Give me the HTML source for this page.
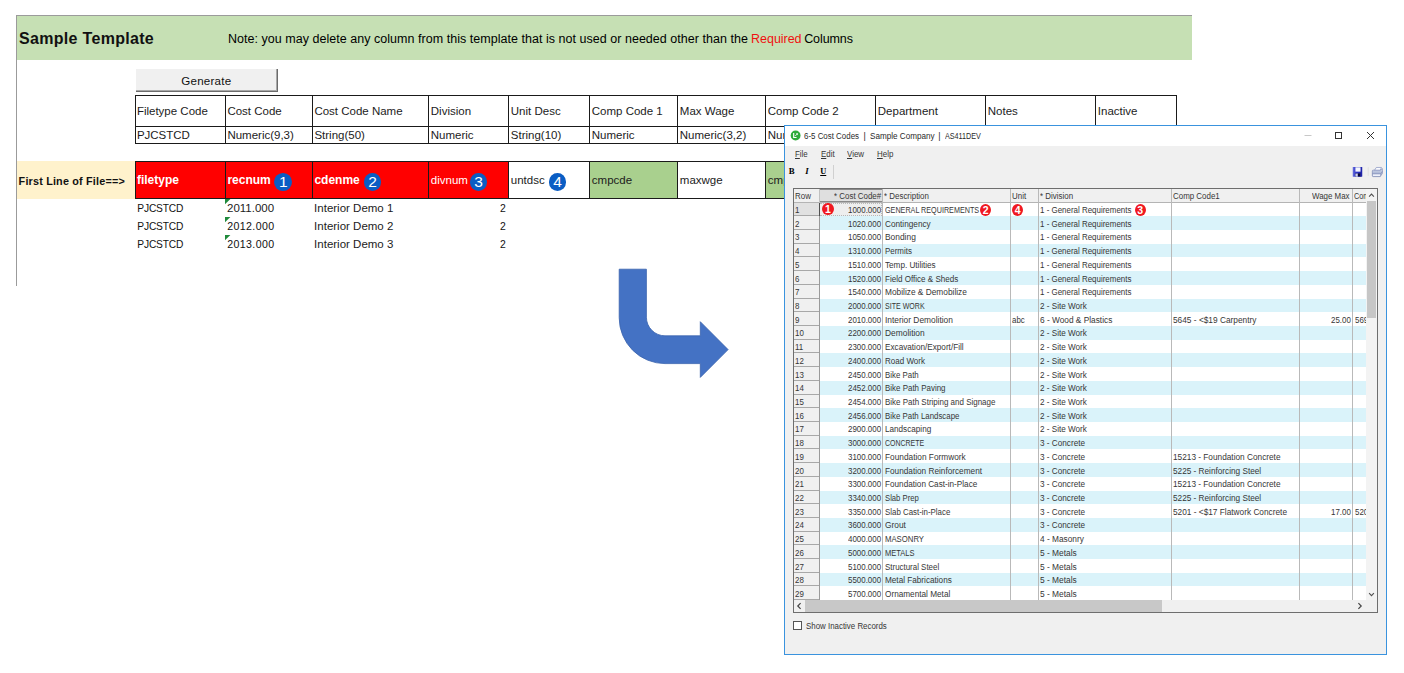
<!DOCTYPE html><html><head><meta charset="utf-8"><title>Sample Template</title><style>

html,body{margin:0;padding:0;background:#fff;}
body{width:1404px;height:673px;position:relative;overflow:hidden;font-family:"Liberation Sans",sans-serif;}
.a{position:absolute;}
.t{position:absolute;white-space:pre;line-height:1;}
.btn{background:#f0f0f0;border-right:1px solid #6b6b6b;border-bottom:1px solid #6b6b6b;box-sizing:border-box;box-shadow:inset -1px -1px 0 #a8a8a8;}
.circ{background:#0a5dc4;border-radius:50%;width:17.8px;height:17.8px;line-height:17.8px;text-align:center;font-size:15.5px;color:#fff;}
.rc{background:#f01820;border-radius:50%;width:11.4px;height:12.2px;line-height:12.4px;text-align:center;font-size:10.5px;font-weight:bold;color:#fff;}
.req{color:#f01010;}
.ul{text-decoration:underline;}
.mn::first-letter{text-decoration:underline;}
.clip{width:12px;overflow:hidden;}
.clip2{width:13.8px;overflow:hidden;}

</style></head><body>
<div class="a" style="left:16px;top:15px;width:1176px;height:1px;background:#9b9b9b;"></div>
<div class="a" style="left:16px;top:15px;width:1px;height:271px;background:#9b9b9b;"></div>
<div class="a" style="left:17px;top:16px;width:1175px;height:44px;background:#c6e0b4;"></div>
<div class="t" style="top:31px;font-size:16px;letter-spacing:0.299px;left:19.10px;font-weight:bold;color:#111;">Sample Template</div>
<div class="t" style="top:33px;font-size:12.5px;letter-spacing:0.032px;left:228.00px;">Note: you may delete any column from this template that is not used or needed other than the </div>
<div class="t" style="top:33px;font-size:12.5px;letter-spacing:-0.042px;left:751.10px;color:#f01010;">Required</div>
<div class="t" style="top:33px;font-size:12.5px;letter-spacing:-0.090px;left:804.20px;">Columns</div>
<div class="a btn" style="left:136px;top:69px;width:142px;height:22.6px;"></div>
<div class="t" style="top:75px;font-size:11.6px;letter-spacing:0.207px;left:181.30px;color:#111;">Generate</div>
<div class="a" style="left:135px;top:95px;width:1042px;height:1px;background:#1a1a1a;"></div>
<div class="a" style="left:135px;top:126px;width:1042px;height:1px;background:#1a1a1a;"></div>
<div class="a" style="left:135px;top:143px;width:1042px;height:1px;background:#1a1a1a;"></div>
<div class="a" style="left:135px;top:95px;width:1px;height:49px;background:#1a1a1a;"></div>
<div class="a" style="left:225px;top:95px;width:1px;height:49px;background:#1a1a1a;"></div>
<div class="a" style="left:312px;top:95px;width:1px;height:49px;background:#1a1a1a;"></div>
<div class="a" style="left:428px;top:95px;width:1px;height:49px;background:#1a1a1a;"></div>
<div class="a" style="left:508px;top:95px;width:1px;height:49px;background:#1a1a1a;"></div>
<div class="a" style="left:589px;top:95px;width:1px;height:49px;background:#1a1a1a;"></div>
<div class="a" style="left:677px;top:95px;width:1px;height:49px;background:#1a1a1a;"></div>
<div class="a" style="left:765px;top:95px;width:1px;height:49px;background:#1a1a1a;"></div>
<div class="a" style="left:875px;top:95px;width:1px;height:49px;background:#1a1a1a;"></div>
<div class="a" style="left:985px;top:95px;width:1px;height:49px;background:#1a1a1a;"></div>
<div class="a" style="left:1095px;top:95px;width:1px;height:49px;background:#1a1a1a;"></div>
<div class="a" style="left:1176px;top:95px;width:1px;height:49px;background:#1a1a1a;"></div>
<div class="t" style="top:106px;font-size:11.5px;left:136.90px;color:#1c1c1c;">Filetype Code</div>
<div class="t" style="top:130px;font-size:11.5px;left:136.90px;color:#1c1c1c;">PJCSTCD</div>
<div class="t" style="top:106px;font-size:11.5px;left:227.40px;color:#1c1c1c;">Cost Code</div>
<div class="t" style="top:130px;font-size:11.5px;left:227.40px;color:#1c1c1c;">Numeric(9,3)</div>
<div class="t" style="top:106px;font-size:11.5px;left:314.40px;color:#1c1c1c;">Cost Code Name</div>
<div class="t" style="top:130px;font-size:11.5px;left:314.40px;color:#1c1c1c;">String(50)</div>
<div class="t" style="top:106px;font-size:11.5px;left:430.80px;color:#1c1c1c;">Division</div>
<div class="t" style="top:130px;font-size:11.5px;left:430.80px;color:#1c1c1c;">Numeric</div>
<div class="t" style="top:106px;font-size:11.5px;left:510.80px;color:#1c1c1c;">Unit Desc</div>
<div class="t" style="top:130px;font-size:11.5px;left:510.80px;color:#1c1c1c;">String(10)</div>
<div class="t" style="top:106px;font-size:11.5px;left:591.80px;color:#1c1c1c;">Comp Code 1</div>
<div class="t" style="top:130px;font-size:11.5px;left:591.80px;color:#1c1c1c;">Numeric</div>
<div class="t" style="top:106px;font-size:11.5px;left:679.80px;color:#1c1c1c;">Max Wage</div>
<div class="t" style="top:130px;font-size:11.5px;left:679.80px;color:#1c1c1c;">Numeric(3,2)</div>
<div class="t" style="top:106px;font-size:11.5px;left:767.80px;color:#1c1c1c;">Comp Code 2</div>
<div class="t" style="top:130px;font-size:11.5px;left:767.80px;color:#1c1c1c;">Numeric</div>
<div class="t" style="top:106px;font-size:11.5px;left:877.80px;color:#1c1c1c;">Department</div>
<div class="t" style="top:130px;font-size:11.5px;left:877.80px;color:#1c1c1c;">String(50)</div>
<div class="t" style="top:106px;font-size:11.5px;left:987.80px;color:#1c1c1c;">Notes</div>
<div class="t" style="top:130px;font-size:11.5px;left:987.80px;color:#1c1c1c;">String</div>
<div class="t" style="top:106px;font-size:11.5px;left:1097.80px;color:#1c1c1c;">Inactive</div>
<div class="t" style="top:130px;font-size:11.5px;left:1097.80px;color:#1c1c1c;">String(1)</div>
<div class="a" style="left:17px;top:161px;width:118px;height:38.4px;background:#fff2cc;"></div>
<div class="t" style="top:176px;font-size:10.8px;letter-spacing:0.191px;left:18.60px;font-weight:bold;color:#111;">First Line of File==&gt;</div>
<div class="a" style="left:135px;top:161px;width:90px;height:38px;background:#ff0000;"></div>
<div class="a" style="left:225px;top:161px;width:87px;height:38px;background:#ff0000;"></div>
<div class="a" style="left:312px;top:161px;width:116px;height:38px;background:#ff0000;"></div>
<div class="a" style="left:428px;top:161px;width:80px;height:38px;background:#ff0000;"></div>
<div class="a" style="left:508px;top:161px;width:81px;height:38px;background:#ffffff;"></div>
<div class="a" style="left:589px;top:161px;width:88px;height:38px;background:#a9d08e;"></div>
<div class="a" style="left:677px;top:161px;width:88px;height:38px;background:#ffffff;"></div>
<div class="a" style="left:765px;top:161px;width:110px;height:38px;background:#a9d08e;"></div>
<div class="a" style="left:875px;top:161px;width:110px;height:38px;background:#ffffff;"></div>
<div class="a" style="left:985px;top:161px;width:110px;height:38px;background:#ffffff;"></div>
<div class="a" style="left:1095px;top:161px;width:81px;height:38px;background:#ffffff;"></div>
<div class="a" style="left:135px;top:161px;width:1042px;height:1px;background:#1a1a1a;"></div>
<div class="a" style="left:135px;top:198px;width:1042px;height:1px;background:#1a1a1a;"></div>
<div class="a" style="left:135px;top:161px;width:1px;height:38px;background:#1a1a1a;"></div>
<div class="a" style="left:225px;top:161px;width:1px;height:38px;background:#1a1a1a;"></div>
<div class="a" style="left:312px;top:161px;width:1px;height:38px;background:#1a1a1a;"></div>
<div class="a" style="left:428px;top:161px;width:1px;height:38px;background:#1a1a1a;"></div>
<div class="a" style="left:508px;top:161px;width:1px;height:38px;background:#1a1a1a;"></div>
<div class="a" style="left:589px;top:161px;width:1px;height:38px;background:#1a1a1a;"></div>
<div class="a" style="left:677px;top:161px;width:1px;height:38px;background:#1a1a1a;"></div>
<div class="a" style="left:765px;top:161px;width:1px;height:38px;background:#1a1a1a;"></div>
<div class="a" style="left:875px;top:161px;width:1px;height:38px;background:#1a1a1a;"></div>
<div class="a" style="left:985px;top:161px;width:1px;height:38px;background:#1a1a1a;"></div>
<div class="a" style="left:1095px;top:161px;width:1px;height:38px;background:#1a1a1a;"></div>
<div class="a" style="left:1176px;top:161px;width:1px;height:38px;background:#1a1a1a;"></div>
<div class="t" style="top:174px;font-size:12px;left:136.90px;font-weight:bold;color:#fff;">filetype</div>
<div class="t" style="top:174px;font-size:12px;left:227.40px;font-weight:bold;color:#fff;">recnum</div>
<div class="t" style="top:174px;font-size:12px;left:314.40px;font-weight:bold;color:#fff;">cdenme</div>
<div class="t" style="top:175px;font-size:11.5px;left:430.80px;color:#fff;">divnum</div>
<div class="t" style="top:175px;font-size:11.5px;left:510.80px;color:#1c1c1c;">untdsc</div>
<div class="t" style="top:175px;font-size:11.5px;left:591.80px;color:#1c1c1c;">cmpcde</div>
<div class="t" style="top:175px;font-size:11.5px;left:679.80px;color:#1c1c1c;">maxwge</div>
<div class="t" style="top:175px;font-size:11.5px;left:767.80px;color:#1c1c1c;">cmpcd2</div>
<div class="t" style="top:175px;font-size:11.5px;left:877.80px;color:#1c1c1c;">dptmnt</div>
<div class="t" style="top:175px;font-size:11.5px;left:987.80px;color:#1c1c1c;">ntetxt</div>
<div class="t" style="top:175px;font-size:11.5px;left:1097.80px;color:#1c1c1c;">inactv</div>
<div class="a circ" style="left:274.4px;top:173.0px;">1</div>
<div class="a circ" style="left:363.6px;top:173.0px;">2</div>
<div class="a circ" style="left:469.6px;top:173.3px;">3</div>
<div class="a circ" style="left:548.7px;top:173.2px;">4</div>
<div class="t" style="top:204px;font-size:10.2px;letter-spacing:-0.155px;left:137.30px;color:#111;">PJCSTCD</div>
<div class="t" style="top:203px;font-size:11.5px;left:227.00px;color:#1c1c1c;">2011.000</div>
<div class="t" style="top:203px;font-size:11.5px;left:314.10px;color:#1c1c1c;">Interior Demo 1</div>
<div class="t" style="top:204px;font-size:10.4px;left:499.90px;color:#111;">2</div>
<svg class="a" style="left:225.4px;top:199.4px" width="6" height="6"><path d="M0 0H5.4L0 5.2Z" fill="#1f8a3b"/></svg>
<div class="t" style="top:222px;font-size:10.2px;letter-spacing:-0.155px;left:137.30px;color:#111;">PJCSTCD</div>
<div class="t" style="top:221px;font-size:10.6px;letter-spacing:0.377px;left:227.30px;color:#111;">2012.000</div>
<div class="t" style="top:221px;font-size:11.5px;left:314.10px;color:#1c1c1c;">Interior Demo 2</div>
<div class="t" style="top:222px;font-size:10.4px;left:499.90px;color:#111;">2</div>
<svg class="a" style="left:225.4px;top:217.2px" width="6" height="6"><path d="M0 0H5.4L0 5.2Z" fill="#1f8a3b"/></svg>
<div class="t" style="top:240px;font-size:10.2px;letter-spacing:-0.155px;left:137.30px;color:#111;">PJCSTCD</div>
<div class="t" style="top:239px;font-size:10.6px;letter-spacing:0.377px;left:227.30px;color:#111;">2013.000</div>
<div class="t" style="top:239px;font-size:11.5px;left:314.10px;color:#1c1c1c;">Interior Demo 3</div>
<div class="t" style="top:240px;font-size:10.4px;left:499.90px;color:#111;">2</div>
<svg class="a" style="left:225.4px;top:235px" width="6" height="6"><path d="M0 0H5.4L0 5.2Z" fill="#1f8a3b"/></svg>
<svg class="a" style="left:600px;top:260px" width="140" height="130" viewBox="600 260 140 130"><path d="M619.2 269.2H646.4V317.2A18.6 18.6 0 0 0 665 335.8H700.3V321.7L728.1 349.6L700.3 377.4V363.6H665A45.8 45.8 0 0 1 619.2 317.8Z" fill="#4472c4" stroke="#3a63ad" stroke-width="0.8"/></svg>
<div class="a" style="left:784px;top:125px;width:603px;height:530px;background:#f0f0f0;border:1px solid #3a93de;box-sizing:border-box;"></div>
<div class="a" style="left:785px;top:126px;width:601px;height:20px;background:#fff;"></div>
<svg class="a" style="left:790px;top:129.6px" width="11" height="11" viewBox="0 0 11 11"><circle cx="5.6" cy="5.5" r="4.95" fill="#2eab3b"/><path d="M3.7 3.1V7.5H6.6" stroke="#fff" stroke-width="1.15" fill="none"/><path d="M5.3 5.9L7.3 3.9" stroke="#fff" stroke-width="0.9" fill="none"/><path d="M5.9 3.3H7.9V5.3Z" fill="#fff"/></svg>
<div class="t" style="top:132px;font-size:8.9px;transform:scaleX(0.8918);transform-origin:0 0;left:804.40px;color:#2a2a2a;">6-5 Cost Codes</div>
<div class="t" style="top:132px;font-size:8.9px;transform:scaleX(1.0000);transform-origin:0 0;left:863.60px;color:#2a2a2a;">|</div>
<div class="t" style="top:132px;font-size:8.9px;transform:scaleX(0.9143);transform-origin:0 0;left:869.50px;color:#2a2a2a;">Sample Company</div>
<div class="t" style="top:132px;font-size:8.9px;transform:scaleX(1.0000);transform-origin:0 0;left:938.20px;color:#2a2a2a;">|</div>
<div class="t" style="top:132px;font-size:8.9px;transform:scaleX(0.8113);transform-origin:0 0;left:944.50px;color:#2a2a2a;">AS411DEV</div>
<svg class="a" style="left:1300px;top:128px" width="84" height="16" viewBox="1300 128 84 16"><path d="M1304.5 135.5H1311.5" stroke="#c8c8c8" stroke-width="1"/><rect x="1335.5" y="132.5" width="6" height="6" fill="none" stroke="#333" stroke-width="1"/><path d="M1367 132L1374 139M1374 132L1367 139" stroke="#333" stroke-width="1"/></svg>
<div class="t" style="top:150px;font-size:8.5px;transform:scaleX(0.9325);transform-origin:0 0;left:795.10px;color:#363636;"><u>F</u>ile</div>
<div class="t" style="top:150px;font-size:8.5px;transform:scaleX(0.9325);transform-origin:0 0;left:820.60px;color:#363636;"><u>E</u>dit</div>
<div class="t" style="top:150px;font-size:8.5px;transform:scaleX(0.9325);transform-origin:0 0;left:847.10px;color:#363636;"><u>V</u>iew</div>
<div class="t" style="top:150px;font-size:8.5px;transform:scaleX(0.9325);transform-origin:0 0;left:877.40px;color:#363636;"><u>H</u>elp</div>
<div class="t" style="top:167px;font-size:8.8px;left:788.80px;font-weight:bold;font-family:'Liberation Serif', serif;">B</div>
<div class="t" style="top:167px;font-size:8.8px;left:805.20px;font-weight:bold;font-style:italic;font-family:'Liberation Serif', serif;">I</div>
<div class="t ul" style="top:168px;font-size:8.4px;left:820.20px;font-weight:bold;font-family:'Liberation Serif', serif;">U</div>
<div class="a" style="left:833px;top:165px;width:1px;height:14px;background:#d0d0d0;"></div>
<svg class="a" style="left:1350px;top:165px" width="35" height="14" viewBox="631.2 451.96 368.2 147.28"><defs><linearGradient id="sv" x1="0" x2="1" y1="0" y2="0"><stop offset="0" stop-color="#6a70dc"/><stop offset="0.35" stop-color="#2f36c8"/><stop offset="1" stop-color="#1d22a8"/></linearGradient><linearGradient id="pr" x1="0" x2="0" y1="0" y2="1"><stop offset="0" stop-color="#d5dcee"/><stop offset="1" stop-color="#8e9cc2"/></linearGradient></defs><rect x="660" y="472" width="100" height="103" rx="6" fill="url(#sv)"/><rect x="688" y="476" width="54" height="46" fill="#f3f5fd"/><rect x="684" y="538" width="60" height="37" fill="#20207a"/><rect x="688" y="542" width="26" height="33" fill="#cfd3ec"/><rect x="714" y="544" width="22" height="24" fill="#0c0c30"/><rect x="818" y="475" width="9" height="92" fill="#dedede"/><path d="M886 512L908 478H962L948 512Z" fill="#fbfcff" stroke="#7f8dbb" stroke-width="7"/><path d="M866 514Q866 506 876 506H950L972 490V540L950 574H876Q866 574 866 566Z" fill="url(#pr)" stroke="#6f7dae" stroke-width="6"/><path d="M866 545H952L972 520" fill="none" stroke="#6f7dae" stroke-width="5"/><rect x="872" y="550" width="76" height="18" fill="#eef1fa"/></svg>
<div class="a" style="left:793px;top:188px;width:585px;height:425px;background:#fff;border:1px solid #6e6e6e;box-sizing:border-box;"></div>
<div class="a" style="left:794px;top:189px;width:572px;height:13px;background:#f0f0f0;"></div>
<div class="a" style="left:820px;top:189px;width:62px;height:13px;background:#dfdfdf;"></div>
<div class="a" style="left:794px;top:202px;width:572px;height:1px;background:#b4b4b4;"></div>
<div class="a" style="left:820px;top:189px;width:63px;height:1px;background:#8a8a8a;"></div>
<div class="a" style="left:820px;top:201px;width:63px;height:1px;background:#8a8a8a;"></div>
<div class="a" style="left:820px;top:203px;width:62px;height:13px;background:#eeeeee;"></div>
<div class="a" style="left:794px;top:203px;width:25px;height:13px;background:#e1e1e1;border-bottom:1px solid #a8a8a8;box-sizing:border-box;"></div>
<div class="t" style="top:206px;font-size:8.5px;transform:scaleX(0.9325);transform-origin:0 0;left:794.90px;color:#363636;">1</div>
<div class="t" style="top:206px;font-size:8.5px;transform:scaleX(0.9325);transform-origin:0 0;left:848.14px;color:#363636;">1000.000</div>
<div class="t" style="top:206px;font-size:8.5px;transform:scaleX(0.8466);transform-origin:0 0;left:884.70px;color:#363636;">GENERAL REQUIREMENTS</div>
<div class="t" style="top:206px;font-size:8.5px;transform:scaleX(0.9346);transform-origin:0 0;left:1040.30px;color:#363636;">1 - General Requirements</div>
<div class="a" style="left:820px;top:216px;width:546px;height:14px;background:#daf3fa;"></div>
<div class="a" style="left:794px;top:216px;width:25px;height:14px;background:#f0f0f0;border-bottom:1px solid #a8a8a8;box-sizing:border-box;"></div>
<div class="t" style="top:220px;font-size:8.5px;transform:scaleX(0.9325);transform-origin:0 0;left:794.90px;color:#363636;">2</div>
<div class="t" style="top:220px;font-size:8.5px;transform:scaleX(0.9325);transform-origin:0 0;left:848.14px;color:#363636;">1020.000</div>
<div class="t" style="top:220px;font-size:8.5px;transform:scaleX(0.9669);transform-origin:0 0;left:884.70px;color:#363636;">Contingency</div>
<div class="t" style="top:220px;font-size:8.5px;transform:scaleX(0.9346);transform-origin:0 0;left:1040.30px;color:#363636;">1 - General Requirements</div>
<div class="a" style="left:794px;top:230px;width:25px;height:14px;background:#f0f0f0;border-bottom:1px solid #a8a8a8;box-sizing:border-box;"></div>
<div class="t" style="top:233px;font-size:8.5px;transform:scaleX(0.9325);transform-origin:0 0;left:794.90px;color:#363636;">3</div>
<div class="t" style="top:233px;font-size:8.5px;transform:scaleX(0.9325);transform-origin:0 0;left:848.14px;color:#363636;">1050.000</div>
<div class="t" style="top:233px;font-size:8.5px;transform:scaleX(0.9871);transform-origin:0 0;left:884.70px;color:#363636;">Bonding</div>
<div class="t" style="top:233px;font-size:8.5px;transform:scaleX(0.9346);transform-origin:0 0;left:1040.30px;color:#363636;">1 - General Requirements</div>
<div class="a" style="left:820px;top:244px;width:546px;height:13px;background:#daf3fa;"></div>
<div class="a" style="left:794px;top:244px;width:25px;height:13px;background:#f0f0f0;border-bottom:1px solid #a8a8a8;box-sizing:border-box;"></div>
<div class="t" style="top:247px;font-size:8.5px;transform:scaleX(0.9325);transform-origin:0 0;left:794.90px;color:#363636;">4</div>
<div class="t" style="top:247px;font-size:8.5px;transform:scaleX(0.9325);transform-origin:0 0;left:848.14px;color:#363636;">1310.000</div>
<div class="t" style="top:247px;font-size:8.5px;transform:scaleX(0.9336);transform-origin:0 0;left:884.70px;color:#363636;">Permits</div>
<div class="t" style="top:247px;font-size:8.5px;transform:scaleX(0.9346);transform-origin:0 0;left:1040.30px;color:#363636;">1 - General Requirements</div>
<div class="a" style="left:794px;top:257px;width:25px;height:14px;background:#f0f0f0;border-bottom:1px solid #a8a8a8;box-sizing:border-box;"></div>
<div class="t" style="top:261px;font-size:8.5px;transform:scaleX(0.9325);transform-origin:0 0;left:794.90px;color:#363636;">5</div>
<div class="t" style="top:261px;font-size:8.5px;transform:scaleX(0.9325);transform-origin:0 0;left:848.14px;color:#363636;">1510.000</div>
<div class="t" style="top:261px;font-size:8.5px;transform:scaleX(0.9583);transform-origin:0 0;left:884.70px;color:#363636;">Temp. Utilities</div>
<div class="t" style="top:261px;font-size:8.5px;transform:scaleX(0.9346);transform-origin:0 0;left:1040.30px;color:#363636;">1 - General Requirements</div>
<div class="a" style="left:820px;top:271px;width:546px;height:14px;background:#daf3fa;"></div>
<div class="a" style="left:794px;top:271px;width:25px;height:14px;background:#f0f0f0;border-bottom:1px solid #a8a8a8;box-sizing:border-box;"></div>
<div class="t" style="top:275px;font-size:8.5px;transform:scaleX(0.9325);transform-origin:0 0;left:794.90px;color:#363636;">6</div>
<div class="t" style="top:275px;font-size:8.5px;transform:scaleX(0.9325);transform-origin:0 0;left:848.14px;color:#363636;">1520.000</div>
<div class="t" style="top:275px;font-size:8.5px;transform:scaleX(0.9479);transform-origin:0 0;left:884.70px;color:#363636;">Field Office &amp; Sheds</div>
<div class="t" style="top:275px;font-size:8.5px;transform:scaleX(0.9346);transform-origin:0 0;left:1040.30px;color:#363636;">1 - General Requirements</div>
<div class="a" style="left:794px;top:285px;width:25px;height:14px;background:#f0f0f0;border-bottom:1px solid #a8a8a8;box-sizing:border-box;"></div>
<div class="t" style="top:288px;font-size:8.5px;transform:scaleX(0.9325);transform-origin:0 0;left:794.90px;color:#363636;">7</div>
<div class="t" style="top:288px;font-size:8.5px;transform:scaleX(0.9325);transform-origin:0 0;left:848.14px;color:#363636;">1540.000</div>
<div class="t" style="top:288px;font-size:8.5px;transform:scaleX(0.9794);transform-origin:0 0;left:884.70px;color:#363636;">Mobilize &amp; Demobilize</div>
<div class="t" style="top:288px;font-size:8.5px;transform:scaleX(0.9346);transform-origin:0 0;left:1040.30px;color:#363636;">1 - General Requirements</div>
<div class="a" style="left:820px;top:299px;width:546px;height:13px;background:#daf3fa;"></div>
<div class="a" style="left:794px;top:299px;width:25px;height:13px;background:#f0f0f0;border-bottom:1px solid #a8a8a8;box-sizing:border-box;"></div>
<div class="t" style="top:302px;font-size:8.5px;transform:scaleX(0.9325);transform-origin:0 0;left:794.90px;color:#363636;">8</div>
<div class="t" style="top:302px;font-size:8.5px;transform:scaleX(0.9325);transform-origin:0 0;left:848.14px;color:#363636;">2000.000</div>
<div class="t" style="top:302px;font-size:8.5px;transform:scaleX(0.8301);transform-origin:0 0;left:884.70px;color:#363636;">SITE WORK</div>
<div class="t" style="top:302px;font-size:8.5px;transform:scaleX(0.9557);transform-origin:0 0;left:1040.30px;color:#363636;">2 - Site Work</div>
<div class="a" style="left:794px;top:312px;width:25px;height:14px;background:#f0f0f0;border-bottom:1px solid #a8a8a8;box-sizing:border-box;"></div>
<div class="t" style="top:316px;font-size:8.5px;transform:scaleX(0.9325);transform-origin:0 0;left:794.90px;color:#363636;">9</div>
<div class="t" style="top:316px;font-size:8.5px;transform:scaleX(0.9325);transform-origin:0 0;left:848.14px;color:#363636;">2010.000</div>
<div class="t" style="top:316px;font-size:8.5px;transform:scaleX(0.9843);transform-origin:0 0;left:884.70px;color:#363636;">Interior Demolition</div>
<div class="t" style="top:316px;font-size:8.5px;transform:scaleX(0.9325);transform-origin:0 0;left:1012.00px;color:#363636;">abc</div>
<div class="t" style="top:316px;font-size:8.5px;transform:scaleX(0.9768);transform-origin:0 0;left:1040.30px;color:#363636;">6 - Wood &amp; Plastics</div>
<div class="t" style="top:316px;font-size:8.5px;transform:scaleX(0.9778);transform-origin:0 0;left:1173.30px;color:#363636;">5645 - &lt;$19 Carpentry</div>
<div class="t" style="top:316px;font-size:8.5px;transform:scaleX(0.9325);transform-origin:0 0;left:1331.36px;color:#363636;">25.00</div>
<div class="t clip" style="top:316px;font-size:8.5px;transform:scaleX(0.9325);transform-origin:0 0;left:1354.50px;color:#363636;">569</div>
<div class="a" style="left:820px;top:326px;width:546px;height:14px;background:#daf3fa;"></div>
<div class="a" style="left:794px;top:326px;width:25px;height:14px;background:#f0f0f0;border-bottom:1px solid #a8a8a8;box-sizing:border-box;"></div>
<div class="t" style="top:329px;font-size:8.5px;transform:scaleX(0.9325);transform-origin:0 0;left:794.90px;color:#363636;">10</div>
<div class="t" style="top:329px;font-size:8.5px;transform:scaleX(0.9325);transform-origin:0 0;left:848.14px;color:#363636;">2200.000</div>
<div class="t" style="top:329px;font-size:8.5px;transform:scaleX(0.9886);transform-origin:0 0;left:884.70px;color:#363636;">Demolition</div>
<div class="t" style="top:329px;font-size:8.5px;transform:scaleX(0.9557);transform-origin:0 0;left:1040.30px;color:#363636;">2 - Site Work</div>
<div class="a" style="left:794px;top:340px;width:25px;height:13px;background:#f0f0f0;border-bottom:1px solid #a8a8a8;box-sizing:border-box;"></div>
<div class="t" style="top:343px;font-size:8.5px;transform:scaleX(0.9325);transform-origin:0 0;left:794.90px;color:#363636;">11</div>
<div class="t" style="top:343px;font-size:8.5px;transform:scaleX(0.9325);transform-origin:0 0;left:848.14px;color:#363636;">2300.000</div>
<div class="t" style="top:343px;font-size:8.5px;transform:scaleX(0.9617);transform-origin:0 0;left:884.70px;color:#363636;">Excavation/Export/Fill</div>
<div class="t" style="top:343px;font-size:8.5px;transform:scaleX(0.9557);transform-origin:0 0;left:1040.30px;color:#363636;">2 - Site Work</div>
<div class="a" style="left:820px;top:353px;width:546px;height:14px;background:#daf3fa;"></div>
<div class="a" style="left:794px;top:353px;width:25px;height:14px;background:#f0f0f0;border-bottom:1px solid #a8a8a8;box-sizing:border-box;"></div>
<div class="t" style="top:357px;font-size:8.5px;transform:scaleX(0.9325);transform-origin:0 0;left:794.90px;color:#363636;">12</div>
<div class="t" style="top:357px;font-size:8.5px;transform:scaleX(0.9325);transform-origin:0 0;left:848.14px;color:#363636;">2400.000</div>
<div class="t" style="top:357px;font-size:8.5px;transform:scaleX(0.9443);transform-origin:0 0;left:884.70px;color:#363636;">Road Work</div>
<div class="t" style="top:357px;font-size:8.5px;transform:scaleX(0.9557);transform-origin:0 0;left:1040.30px;color:#363636;">2 - Site Work</div>
<div class="a" style="left:794px;top:367px;width:25px;height:14px;background:#f0f0f0;border-bottom:1px solid #a8a8a8;box-sizing:border-box;"></div>
<div class="t" style="top:371px;font-size:8.5px;transform:scaleX(0.9325);transform-origin:0 0;left:794.90px;color:#363636;">13</div>
<div class="t" style="top:371px;font-size:8.5px;transform:scaleX(0.9325);transform-origin:0 0;left:848.14px;color:#363636;">2450.000</div>
<div class="t" style="top:371px;font-size:8.5px;transform:scaleX(0.9261);transform-origin:0 0;left:884.70px;color:#363636;">Bike Path</div>
<div class="t" style="top:371px;font-size:8.5px;transform:scaleX(0.9557);transform-origin:0 0;left:1040.30px;color:#363636;">2 - Site Work</div>
<div class="a" style="left:820px;top:381px;width:546px;height:14px;background:#daf3fa;"></div>
<div class="a" style="left:794px;top:381px;width:25px;height:14px;background:#f0f0f0;border-bottom:1px solid #a8a8a8;box-sizing:border-box;"></div>
<div class="t" style="top:384px;font-size:8.5px;transform:scaleX(0.9325);transform-origin:0 0;left:794.90px;color:#363636;">14</div>
<div class="t" style="top:384px;font-size:8.5px;transform:scaleX(0.9325);transform-origin:0 0;left:848.14px;color:#363636;">2452.000</div>
<div class="t" style="top:384px;font-size:8.5px;transform:scaleX(0.9346);transform-origin:0 0;left:884.70px;color:#363636;">Bike Path Paving</div>
<div class="t" style="top:384px;font-size:8.5px;transform:scaleX(0.9557);transform-origin:0 0;left:1040.30px;color:#363636;">2 - Site Work</div>
<div class="a" style="left:794px;top:395px;width:25px;height:13px;background:#f0f0f0;border-bottom:1px solid #a8a8a8;box-sizing:border-box;"></div>
<div class="t" style="top:398px;font-size:8.5px;transform:scaleX(0.9325);transform-origin:0 0;left:794.90px;color:#363636;">15</div>
<div class="t" style="top:398px;font-size:8.5px;transform:scaleX(0.9325);transform-origin:0 0;left:848.14px;color:#363636;">2454.000</div>
<div class="t" style="top:398px;font-size:8.5px;transform:scaleX(0.9382);transform-origin:0 0;left:884.70px;color:#363636;">Bike Path Striping and Signage</div>
<div class="t" style="top:398px;font-size:8.5px;transform:scaleX(0.9557);transform-origin:0 0;left:1040.30px;color:#363636;">2 - Site Work</div>
<div class="a" style="left:820px;top:408px;width:546px;height:14px;background:#daf3fa;"></div>
<div class="a" style="left:794px;top:408px;width:25px;height:14px;background:#f0f0f0;border-bottom:1px solid #a8a8a8;box-sizing:border-box;"></div>
<div class="t" style="top:412px;font-size:8.5px;transform:scaleX(0.9325);transform-origin:0 0;left:794.90px;color:#363636;">16</div>
<div class="t" style="top:412px;font-size:8.5px;transform:scaleX(0.9325);transform-origin:0 0;left:848.14px;color:#363636;">2456.000</div>
<div class="t" style="top:412px;font-size:8.5px;transform:scaleX(0.9260);transform-origin:0 0;left:884.70px;color:#363636;">Bike Path Landscape</div>
<div class="t" style="top:412px;font-size:8.5px;transform:scaleX(0.9557);transform-origin:0 0;left:1040.30px;color:#363636;">2 - Site Work</div>
<div class="a" style="left:794px;top:422px;width:25px;height:14px;background:#f0f0f0;border-bottom:1px solid #a8a8a8;box-sizing:border-box;"></div>
<div class="t" style="top:425px;font-size:8.5px;transform:scaleX(0.9325);transform-origin:0 0;left:794.90px;color:#363636;">17</div>
<div class="t" style="top:425px;font-size:8.5px;transform:scaleX(0.9325);transform-origin:0 0;left:848.14px;color:#363636;">2900.000</div>
<div class="t" style="top:425px;font-size:8.5px;transform:scaleX(0.9581);transform-origin:0 0;left:884.70px;color:#363636;">Landscaping</div>
<div class="t" style="top:425px;font-size:8.5px;transform:scaleX(0.9557);transform-origin:0 0;left:1040.30px;color:#363636;">2 - Site Work</div>
<div class="a" style="left:820px;top:436px;width:546px;height:13px;background:#daf3fa;"></div>
<div class="a" style="left:794px;top:436px;width:25px;height:13px;background:#f0f0f0;border-bottom:1px solid #a8a8a8;box-sizing:border-box;"></div>
<div class="t" style="top:439px;font-size:8.5px;transform:scaleX(0.9325);transform-origin:0 0;left:794.90px;color:#363636;">18</div>
<div class="t" style="top:439px;font-size:8.5px;transform:scaleX(0.9325);transform-origin:0 0;left:848.14px;color:#363636;">3000.000</div>
<div class="t" style="top:439px;font-size:8.5px;transform:scaleX(0.8197);transform-origin:0 0;left:884.70px;color:#363636;">CONCRETE</div>
<div class="t" style="top:439px;font-size:8.5px;transform:scaleX(0.9641);transform-origin:0 0;left:1040.30px;color:#363636;">3 - Concrete</div>
<div class="a" style="left:794px;top:449px;width:25px;height:14px;background:#f0f0f0;border-bottom:1px solid #a8a8a8;box-sizing:border-box;"></div>
<div class="t" style="top:453px;font-size:8.5px;transform:scaleX(0.9325);transform-origin:0 0;left:794.90px;color:#363636;">19</div>
<div class="t" style="top:453px;font-size:8.5px;transform:scaleX(0.9325);transform-origin:0 0;left:848.14px;color:#363636;">3100.000</div>
<div class="t" style="top:453px;font-size:8.5px;transform:scaleX(0.9761);transform-origin:0 0;left:884.70px;color:#363636;">Foundation Formwork</div>
<div class="t" style="top:453px;font-size:8.5px;transform:scaleX(0.9641);transform-origin:0 0;left:1040.30px;color:#363636;">3 - Concrete</div>
<div class="t" style="top:453px;font-size:8.5px;transform:scaleX(0.9722);transform-origin:0 0;left:1173.30px;color:#363636;">15213 - Foundation Concrete</div>
<div class="a" style="left:820px;top:463px;width:546px;height:14px;background:#daf3fa;"></div>
<div class="a" style="left:794px;top:463px;width:25px;height:14px;background:#f0f0f0;border-bottom:1px solid #a8a8a8;box-sizing:border-box;"></div>
<div class="t" style="top:467px;font-size:8.5px;transform:scaleX(0.9325);transform-origin:0 0;left:794.90px;color:#363636;">20</div>
<div class="t" style="top:467px;font-size:8.5px;transform:scaleX(0.9325);transform-origin:0 0;left:848.14px;color:#363636;">3200.000</div>
<div class="t" style="top:467px;font-size:8.5px;transform:scaleX(0.9683);transform-origin:0 0;left:884.70px;color:#363636;">Foundation Reinforcement</div>
<div class="t" style="top:467px;font-size:8.5px;transform:scaleX(0.9641);transform-origin:0 0;left:1040.30px;color:#363636;">3 - Concrete</div>
<div class="t" style="top:467px;font-size:8.5px;transform:scaleX(0.9671);transform-origin:0 0;left:1173.30px;color:#363636;">5225 - Reinforcing Steel</div>
<div class="a" style="left:794px;top:477px;width:25px;height:14px;background:#f0f0f0;border-bottom:1px solid #a8a8a8;box-sizing:border-box;"></div>
<div class="t" style="top:480px;font-size:8.5px;transform:scaleX(0.9325);transform-origin:0 0;left:794.90px;color:#363636;">21</div>
<div class="t" style="top:480px;font-size:8.5px;transform:scaleX(0.9325);transform-origin:0 0;left:848.14px;color:#363636;">3300.000</div>
<div class="t" style="top:480px;font-size:8.5px;transform:scaleX(0.9622);transform-origin:0 0;left:884.70px;color:#363636;">Foundation Cast-in-Place</div>
<div class="t" style="top:480px;font-size:8.5px;transform:scaleX(0.9641);transform-origin:0 0;left:1040.30px;color:#363636;">3 - Concrete</div>
<div class="t" style="top:480px;font-size:8.5px;transform:scaleX(0.9722);transform-origin:0 0;left:1173.30px;color:#363636;">15213 - Foundation Concrete</div>
<div class="a" style="left:820px;top:491px;width:546px;height:13px;background:#daf3fa;"></div>
<div class="a" style="left:794px;top:491px;width:25px;height:13px;background:#f0f0f0;border-bottom:1px solid #a8a8a8;box-sizing:border-box;"></div>
<div class="t" style="top:494px;font-size:8.5px;transform:scaleX(0.9325);transform-origin:0 0;left:794.90px;color:#363636;">22</div>
<div class="t" style="top:494px;font-size:8.5px;transform:scaleX(0.9325);transform-origin:0 0;left:848.14px;color:#363636;">3340.000</div>
<div class="t" style="top:494px;font-size:8.5px;transform:scaleX(0.9051);transform-origin:0 0;left:884.70px;color:#363636;">Slab Prep</div>
<div class="t" style="top:494px;font-size:8.5px;transform:scaleX(0.9641);transform-origin:0 0;left:1040.30px;color:#363636;">3 - Concrete</div>
<div class="t" style="top:494px;font-size:8.5px;transform:scaleX(0.9671);transform-origin:0 0;left:1173.30px;color:#363636;">5225 - Reinforcing Steel</div>
<div class="a" style="left:794px;top:504px;width:25px;height:14px;background:#f0f0f0;border-bottom:1px solid #a8a8a8;box-sizing:border-box;"></div>
<div class="t" style="top:508px;font-size:8.5px;transform:scaleX(0.9325);transform-origin:0 0;left:794.90px;color:#363636;">23</div>
<div class="t" style="top:508px;font-size:8.5px;transform:scaleX(0.9325);transform-origin:0 0;left:848.14px;color:#363636;">3350.000</div>
<div class="t" style="top:508px;font-size:8.5px;transform:scaleX(0.9277);transform-origin:0 0;left:884.70px;color:#363636;">Slab Cast-in-Place</div>
<div class="t" style="top:508px;font-size:8.5px;transform:scaleX(0.9641);transform-origin:0 0;left:1040.30px;color:#363636;">3 - Concrete</div>
<div class="t" style="top:508px;font-size:8.5px;transform:scaleX(0.9749);transform-origin:0 0;left:1173.30px;color:#363636;">5201 - &lt;$17 Flatwork Concrete</div>
<div class="t" style="top:508px;font-size:8.5px;transform:scaleX(0.9325);transform-origin:0 0;left:1331.36px;color:#363636;">17.00</div>
<div class="t clip" style="top:508px;font-size:8.5px;transform:scaleX(0.9325);transform-origin:0 0;left:1354.50px;color:#363636;">520</div>
<div class="a" style="left:820px;top:518px;width:546px;height:14px;background:#daf3fa;"></div>
<div class="a" style="left:794px;top:518px;width:25px;height:14px;background:#f0f0f0;border-bottom:1px solid #a8a8a8;box-sizing:border-box;"></div>
<div class="t" style="top:521px;font-size:8.5px;transform:scaleX(0.9325);transform-origin:0 0;left:794.90px;color:#363636;">24</div>
<div class="t" style="top:521px;font-size:8.5px;transform:scaleX(0.9325);transform-origin:0 0;left:848.14px;color:#363636;">3600.000</div>
<div class="t" style="top:521px;font-size:8.5px;transform:scaleX(0.9828);transform-origin:0 0;left:884.70px;color:#363636;">Grout</div>
<div class="t" style="top:521px;font-size:8.5px;transform:scaleX(0.9641);transform-origin:0 0;left:1040.30px;color:#363636;">3 - Concrete</div>
<div class="a" style="left:794px;top:532px;width:25px;height:13px;background:#f0f0f0;border-bottom:1px solid #a8a8a8;box-sizing:border-box;"></div>
<div class="t" style="top:535px;font-size:8.5px;transform:scaleX(0.9325);transform-origin:0 0;left:794.90px;color:#363636;">25</div>
<div class="t" style="top:535px;font-size:8.5px;transform:scaleX(0.9325);transform-origin:0 0;left:848.14px;color:#363636;">4000.000</div>
<div class="t" style="top:535px;font-size:8.5px;transform:scaleX(0.9106);transform-origin:0 0;left:884.70px;color:#363636;">MASONRY</div>
<div class="t" style="top:535px;font-size:8.5px;transform:scaleX(0.9783);transform-origin:0 0;left:1040.30px;color:#363636;">4 - Masonry</div>
<div class="a" style="left:820px;top:545px;width:546px;height:14px;background:#daf3fa;"></div>
<div class="a" style="left:794px;top:545px;width:25px;height:14px;background:#f0f0f0;border-bottom:1px solid #a8a8a8;box-sizing:border-box;"></div>
<div class="t" style="top:549px;font-size:8.5px;transform:scaleX(0.9325);transform-origin:0 0;left:794.90px;color:#363636;">26</div>
<div class="t" style="top:549px;font-size:8.5px;transform:scaleX(0.9325);transform-origin:0 0;left:848.14px;color:#363636;">5000.000</div>
<div class="t" style="top:549px;font-size:8.5px;transform:scaleX(0.8835);transform-origin:0 0;left:884.70px;color:#363636;">METALS</div>
<div class="t" style="top:549px;font-size:8.5px;transform:scaleX(0.9859);transform-origin:0 0;left:1040.30px;color:#363636;">5 - Metals</div>
<div class="a" style="left:794px;top:559px;width:25px;height:14px;background:#f0f0f0;border-bottom:1px solid #a8a8a8;box-sizing:border-box;"></div>
<div class="t" style="top:563px;font-size:8.5px;transform:scaleX(0.9325);transform-origin:0 0;left:794.90px;color:#363636;">27</div>
<div class="t" style="top:563px;font-size:8.5px;transform:scaleX(0.9325);transform-origin:0 0;left:848.14px;color:#363636;">5100.000</div>
<div class="t" style="top:563px;font-size:8.5px;transform:scaleX(0.9325);transform-origin:0 0;left:884.70px;color:#363636;">Structural Steel</div>
<div class="t" style="top:563px;font-size:8.5px;transform:scaleX(0.9859);transform-origin:0 0;left:1040.30px;color:#363636;">5 - Metals</div>
<div class="a" style="left:820px;top:573px;width:546px;height:13px;background:#daf3fa;"></div>
<div class="a" style="left:794px;top:573px;width:25px;height:13px;background:#f0f0f0;border-bottom:1px solid #a8a8a8;box-sizing:border-box;"></div>
<div class="t" style="top:576px;font-size:8.5px;transform:scaleX(0.9325);transform-origin:0 0;left:794.90px;color:#363636;">28</div>
<div class="t" style="top:576px;font-size:8.5px;transform:scaleX(0.9325);transform-origin:0 0;left:848.14px;color:#363636;">5500.000</div>
<div class="t" style="top:576px;font-size:8.5px;transform:scaleX(0.9618);transform-origin:0 0;left:884.70px;color:#363636;">Metal Fabrications</div>
<div class="t" style="top:576px;font-size:8.5px;transform:scaleX(0.9859);transform-origin:0 0;left:1040.30px;color:#363636;">5 - Metals</div>
<div class="a" style="left:794px;top:586px;width:25px;height:14px;background:#f0f0f0;border-bottom:1px solid #a8a8a8;box-sizing:border-box;"></div>
<div class="t" style="top:590px;font-size:8.5px;transform:scaleX(0.9325);transform-origin:0 0;left:794.90px;color:#363636;">29</div>
<div class="t" style="top:590px;font-size:8.5px;transform:scaleX(0.9325);transform-origin:0 0;left:848.14px;color:#363636;">5700.000</div>
<div class="t" style="top:590px;font-size:8.5px;transform:scaleX(0.9665);transform-origin:0 0;left:884.70px;color:#363636;">Ornamental Metal</div>
<div class="t" style="top:590px;font-size:8.5px;transform:scaleX(0.9859);transform-origin:0 0;left:1040.30px;color:#363636;">5 - Metals</div>
<div class="a" style="left:819px;top:189px;width:1px;height:14px;background:#c0c0c0;"></div>
<div class="a" style="left:819px;top:203px;width:1px;height:397px;background:#9a9a9a;"></div>
<div class="a" style="left:819px;top:203px;width:1px;height:13px;background:#505050;"></div>
<div class="a" style="left:882px;top:189px;width:1px;height:411px;background:#b9b9b9;"></div>
<div class="a" style="left:1010px;top:189px;width:1px;height:411px;background:#b9b9b9;"></div>
<div class="a" style="left:1038px;top:189px;width:1px;height:411px;background:#b9b9b9;"></div>
<div class="a" style="left:1171px;top:189px;width:1px;height:411px;background:#b9b9b9;"></div>
<div class="a" style="left:1299px;top:189px;width:1px;height:411px;background:#b9b9b9;"></div>
<div class="a" style="left:1352px;top:189px;width:1px;height:411px;background:#b9b9b9;"></div>
<div class="t" style="top:192px;font-size:8.5px;transform:scaleX(0.9325);transform-origin:0 0;left:795.40px;color:#363636;">Row</div>
<div class="t" style="top:192px;font-size:8.5px;transform:scaleX(0.9325);transform-origin:0 0;left:834.15px;color:#363636;">* Cost Code#</div>
<div class="t" style="top:192px;font-size:8.5px;transform:scaleX(0.9325);transform-origin:0 0;left:884.40px;color:#363636;">* Description</div>
<div class="t" style="top:192px;font-size:8.5px;transform:scaleX(0.9325);transform-origin:0 0;left:1012.00px;color:#363636;">Unit</div>
<div class="t" style="top:192px;font-size:8.5px;transform:scaleX(0.9325);transform-origin:0 0;left:1040.30px;color:#363636;">* Division</div>
<div class="t" style="top:192px;font-size:8.5px;transform:scaleX(0.9325);transform-origin:0 0;left:1173.30px;color:#363636;">Comp Code1</div>
<div class="t" style="top:192px;font-size:8.5px;transform:scaleX(0.9325);transform-origin:0 0;left:1312.41px;color:#363636;">Wage Max</div>
<div class="t clip2" style="top:192px;font-size:8.5px;transform:scaleX(0.8600);transform-origin:0 0;left:1354.00px;color:#363636;">Comp Code2</div>
<div class="a" style="left:820px;top:203px;width:62px;height:13px;border:1px dotted #b8b8b8;box-sizing:border-box;border-left:none;"></div>
<div class="a rc" style="left:822.2px;top:203.3px;">1</div>
<div class="a rc" style="left:979.9px;top:203.5px;">2</div>
<div class="a rc" style="left:1134.5px;top:203.5px;">3</div>
<div class="a rc" style="left:1011.9px;top:203.5px;">4</div>
<div class="a" style="left:1366px;top:189px;width:11px;height:411px;background:#f3f3f3;"></div>
<div class="a" style="left:1367px;top:201px;width:9px;height:117px;background:#c6c6c6;"></div>
<svg class="a" style="left:1366px;top:189px" width="11" height="13" viewBox="0 0 11 13"><path d="M3.1 7.6L5.5 5.1L7.9 7.6" stroke="#505050" stroke-width="1.1" fill="none"/></svg>
<svg class="a" style="left:1366px;top:588px" width="11" height="12" viewBox="0 0 11 12"><path d="M3.1 5.2L5.5 7.7L7.9 5.2" stroke="#505050" stroke-width="1.1" fill="none"/></svg>
<div class="a" style="left:794px;top:600px;width:583px;height:12px;background:#f0f0f0;"></div>
<div class="a" style="left:805px;top:600px;width:357px;height:12px;background:#c8c8c8;"></div>
<svg class="a" style="left:794px;top:600px" width="11" height="12" viewBox="0 0 11 12"><path d="M6.6 3.2L3.8 6L6.6 8.8" stroke="#444" stroke-width="1.2" fill="none"/></svg>
<svg class="a" style="left:1354px;top:600px" width="11" height="12" viewBox="0 0 11 12"><path d="M4.4 3.2L7.2 6L4.4 8.8" stroke="#444" stroke-width="1.2" fill="none"/></svg>
<div class="a" style="left:793px;top:621px;width:9px;height:9px;background:#fff;border:1px solid #555;box-sizing:border-box;"></div>
<div class="t" style="top:622px;font-size:8.5px;transform:scaleX(0.9294);transform-origin:0 0;left:805.90px;color:#363636;">Show Inactive Records</div>
</body></html>
